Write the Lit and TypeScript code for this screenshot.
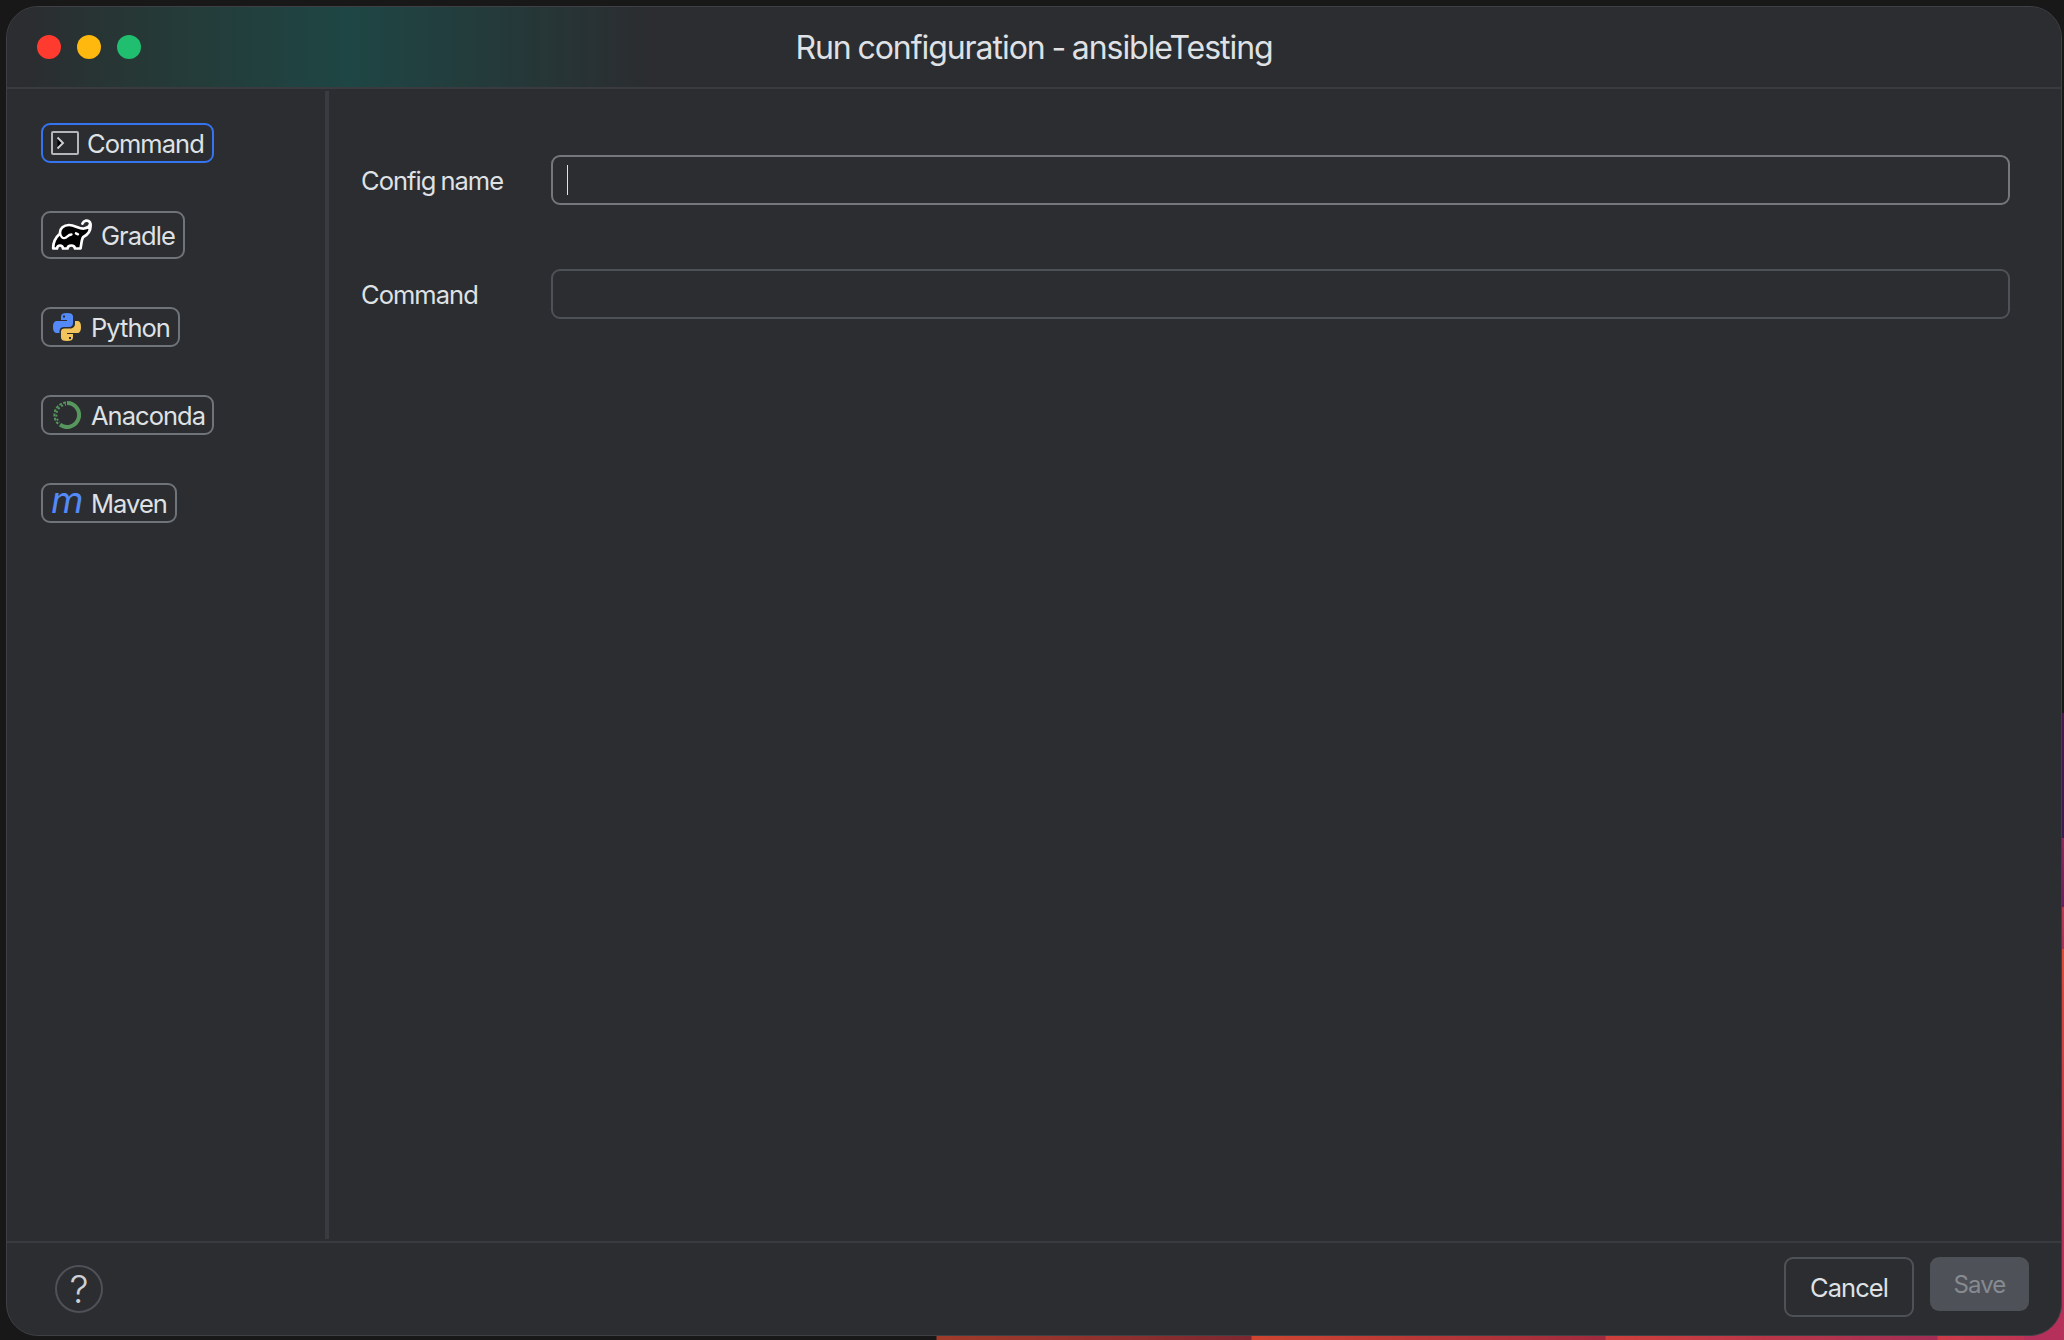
import { LitElement, html, css, TemplateResult } from "lit";
import { customElement, state } from "lit/decorators.js";

const terminalIcon = html`<svg width="28" height="24" viewBox="0 0 28 24">
  <rect x="1" y="1" width="26" height="22" rx="1" fill="none" stroke="#b4b6bb" stroke-width="2"/>
  <path d="M6.500 6.500L12 12L6.500 17.500" fill="#000" stroke="#ced0d6" stroke-width="1.900"/>
</svg>`;

const gradleIcon = html`<svg width="42" height="32" viewBox="0 0 42 32">
  <path d="M2.200 29.500C2 24 3.500 19.500 9 14.500C8.500 9 13 6 18 6C24 6 28 10 33 9.500C36.500 9 38.500 7.500 39.300 5C40.300 11 37 15.500 32.300 18C30.500 20 30.500 25 29.500 29.500H24C23.500 25.500 17 25.500 16.500 29.500H12C11.500 25.500 6.500 25.500 6 29.500Z"
    fill="#000" stroke="#fff" stroke-width="2.700" stroke-linejoin="round"/>
  <path d="M31.500 4.500C33 1.200 37 .8 38.800 3.200C39.800 5 39.300 7 38 9" fill="none" stroke="#fff" stroke-width="2.800" stroke-linecap="round"/>
  <path d="M9 14.500C10 17.500 11.500 19.800 13.800 19C16 18.500 17 15.500 20.500 15.500" fill="none" stroke="#fff" stroke-width="2.300" stroke-linecap="round"/>
  <path d="M25 14.300L27 15.300" stroke="#fff" stroke-width="2.500" stroke-linecap="round"/>
</svg>`;

const pythonIcon = html`<svg width="28" height="28" viewBox="0 0 28 28">
  <path d="M8 7V3.500C8 1 10 0 14 0S20 1 20 3.500V10C20 12.500 18.500 14 16 14H11C8.500 14 6.500 15.500 6.500 18V20H4C1 20 0 17.500 0 14S1 8 4 8H14V7Z" fill="#548af7"/>
  <rect x="10" y="2.500" width="2" height="2" fill="#2b2d30"/>
  <path d="M20 21V24.500C20 27 18 28 14 28S8 27 8 24.500V18.500C8 16.700 9.500 15.500 11.500 15.500H17C20 15.500 22 13.500 22 11V8H24.500C27 8 28 10.500 28 14S27 20 24.500 20H14V21Z" fill="#f2c55c"/>
  <rect x="16" y="24" width="2" height="2" fill="#2b2d30"/>
</svg>`;

const anacondaIcon = html`<svg width="28" height="28" viewBox="0 0 28 28">
  <path d="M14 2A12 12 0 1 1 7 23.700" fill="none" stroke="#57965c" stroke-width="4"/>
  <path d="M13 1.500A12.500 12.500 0 0 0 5 22.800" fill="none" stroke="#57965c" stroke-width="1.900" stroke-dasharray="2.800 1.500"/>
  <path d="M13 3.700A10.400 10.400 0 0 0 6.500 21.500" fill="none" stroke="#57965c" stroke-width="1.900" stroke-dasharray="2 2" stroke-dashoffset="1"/>
</svg>`;

const mavenIcon = html`<span class="maven">m</span>`;

interface Kind {
  id: string;
  icon: TemplateResult;
}

const kinds: Kind[] = [
  { id: "Command", icon: terminalIcon },
  { id: "Gradle", icon: gradleIcon },
  { id: "Python", icon: pythonIcon },
  { id: "Anaconda", icon: anacondaIcon },
  { id: "Maven", icon: mavenIcon },
];

@customElement("app-root")
export class AppRoot extends LitElement {
  static styles = css`
    :host {
      display: block;
      box-sizing: border-box;
      width: 2064px;
      height: 1340px;
      padding: 6px 2px 4px 6px;
      overflow: hidden;
      color: #dfe1e5;
      font-family: Inter, "Liberation Sans", sans-serif;
      font-size: 25.5px;
      letter-spacing: -0.97px;
      background:
        linear-gradient(#0000 713px, #47194a 713px, #3c1c4d 838px, #8c2a5f 838px, #6a1f5a 907px, #bb3a50 907px, #a83058 949px, #dc4a38 949px, #b83058 1240px, #b5305a 1340px) right top / 40px 100% no-repeat,
        linear-gradient(90deg, #0000 936px, #a13b29 937px, #7e2730 1251px, #cf4530 1252px, #a02a3e 1605px, #cf3f3b 1606px, #a32d55 1937px, #cf3c48 1938px, #b83058) left bottom / 100% 10px no-repeat,
        #181818;
    }
    * { box-sizing: border-box; }
    svg { display: block; flex: none; }
    .window {
      display: flex;
      flex-direction: column;
      height: 100%;
      overflow: hidden;
      border: 1px solid #3e4045;
      border-radius: 32px;
      background: #2b2d30;
    }
    .titlebar {
      display: grid;
      grid-template-columns: 1fr auto 1fr;
      align-items: center;
      flex: none;
      height: 82px;
      padding: 0 30px;
      border-bottom: 2px solid #393b40;
      background: linear-gradient(90deg, #2b2d30 20px, #263836 130px, #1e4644 342px, #2b2d30 640px);
    }
    .lights { display: flex; gap: 16px; }
    .light { width: 24px; height: 24px; border-radius: 50%; }
    .red { background: #ff3b30; }
    .yellow { background: #ffb80e; }
    .green { background: #20bf70; }
    .title { font-size: 32px; line-height: 40px; letter-spacing: -1.05px; word-spacing: -1.2px; padding-top: 1px; white-space: nowrap; }
    .body { display: flex; flex: 1; min-height: 0; padding: 2px 0; }
    .side {
      display: flex;
      flex-direction: column;
      align-items: flex-start;
      gap: 48px;
      flex: none;
      width: 322px;
      padding: 32px 34px;
      border-right: 4px solid #393b40;
    }
    .kind {
      display: flex;
      align-items: center;
      height: 40px;
      padding: 0 8px 0 10px;
      gap: 10px;
      border: 2px solid #6f737a;
      border-radius: 9px;
    }
    .kind.selected { border-color: #3574f0; padding-left: 8px; gap: 8px; }
    .kind.Gradle { height: 48px; padding-left: 8px; gap: 8px; }
    .kind.Anaconda { padding-right: 7px; }
    .kind .text { padding-top: 1px; line-height: 30px; }
    .maven {
      width: 28px;
      color: #548af7;
      font-size: 37px;
      font-style: italic;
      line-height: 36px;
      letter-spacing: 0;
      text-indent: -2px;
      height: 36px;
      margin-top: -7px;
    }
    .form {
      display: grid;
      grid-template-columns: 190px 1fr;
      grid-auto-rows: 50px;
      row-gap: 64px;
      align-content: start;
      align-items: center;
      flex: 1;
      padding: 64px 51px 0 32px;
    }
    .form label { padding-top: 1px; word-spacing: -1.2px; }
    .field {
      display: flex;
      align-items: center;
      height: 50px;
      padding-left: 14px;
      border: 2px solid #4e5157;
      border-radius: 9px;
    }
    .field.focused { border-color: #75777c; }
    .caret { width: 1px; height: 30px; background: #dfe1e5; }
    .footer {
      display: flex;
      align-items: flex-start;
      gap: 16px;
      flex: none;
      height: 94px;
      padding: 14px 32px 0 48px;
      border-top: 2px solid #393b40;
    }
    .help {
      display: flex;
      align-items: center;
      justify-content: center;
      width: 48px;
      height: 48px;
      margin: 8px auto 0 0;
      border: 2px solid #4e5157;
      border-radius: 50%;
      font-size: 38px;
      font-weight: 300;
      line-height: 40px;
      letter-spacing: 0;
      color: #ced0d6;
    }
    .btn { display: flex; align-items: center; justify-content: center; border-radius: 9px; }
    .cancel { width: 130px; height: 60px; border: 2px solid #4e5157; padding-top: 1px; }
    .save { width: 99px; height: 54px; background: #4e5157; color: #868a91; font-size: 24px; letter-spacing: -0.9px; padding-top: 1px; }
  `;

  @state() private selected = "Command";

  render() {
    return html`
      <div class="window">
        <header class="titlebar">
          <div class="lights">
            <i class="light red"></i><i class="light yellow"></i><i class="light green"></i>
          </div>
          <div class="title">Run configuration - ansibleTesting</div>
        </header>
        <main class="body">
          <nav class="side">
            ${kinds.map(
              (k) => html`<div
                class="kind ${k.id} ${k.id === this.selected ? "selected" : ""}"
                @click=${() => (this.selected = k.id)}
              >${k.icon}<span class="text">${k.id}</span></div>`
            )}
          </nav>
          <section class="form">
            <label>Config name</label>
            <div class="field focused"><i class="caret"></i></div>
            <label>Command</label>
            <div class="field"></div>
          </section>
        </main>
        <footer class="footer">
          <div class="help">?</div>
          <div class="btn cancel">Cancel</div>
          <div class="btn save">Save</div>
        </footer>
      </div>
    `;
  }
}
